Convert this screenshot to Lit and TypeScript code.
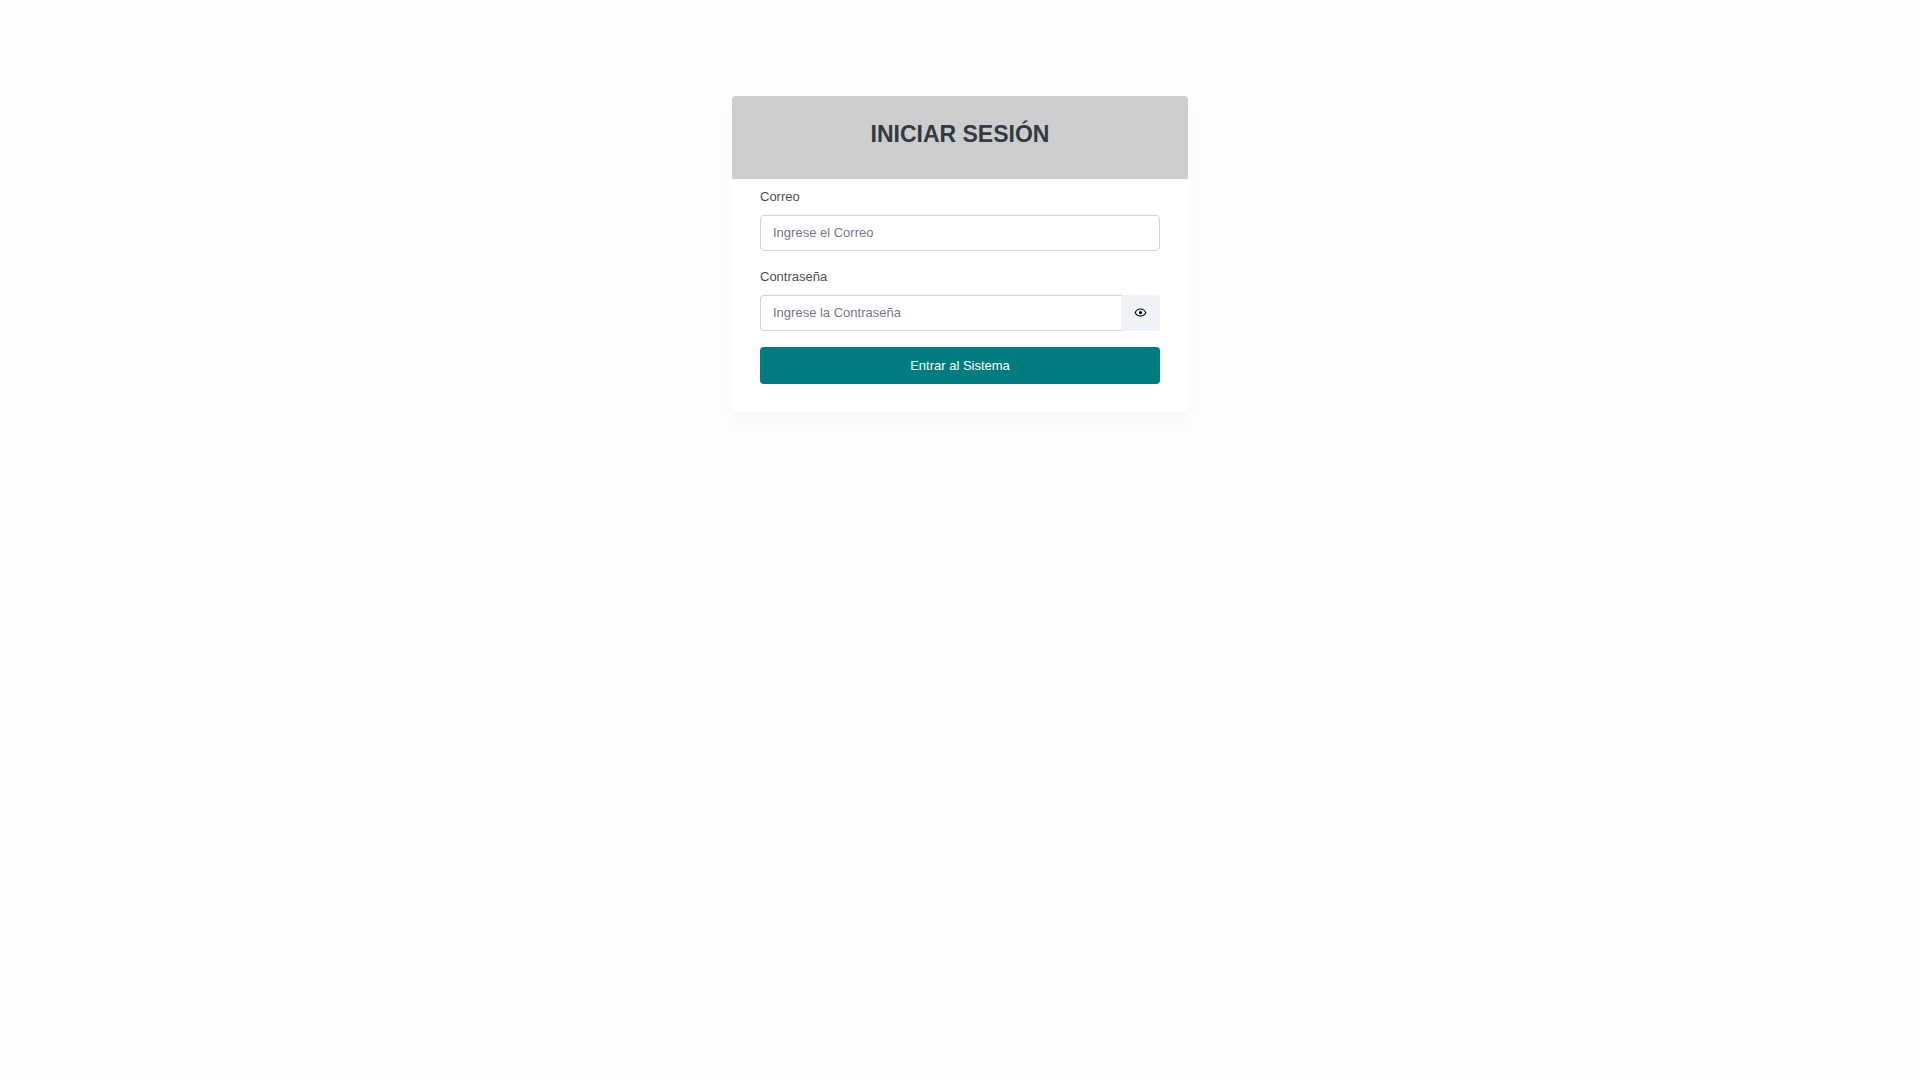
import { LitElement, html, css } from "lit";
import { customElement, state } from "lit/decorators.js";

@customElement("app-root")
export class AppRoot extends LitElement {
  static styles = css`
    :host {
      display: block;
      min-height: 100vh;
      box-sizing: border-box;
      padding: 96px 12px 24px;
      background: #fefefe;
      color: #495057;
      font: 13px/20px "Liberation Sans", Arial, sans-serif;
    }
    *,
    *::before,
    *::after {
      box-sizing: border-box;
    }
    .card {
      max-width: 456px;
      margin: 0 auto;
      background: #fff;
      border-radius: 4px;
      box-shadow: 0 12px 24px rgba(18, 38, 63, 0.03);
      overflow: hidden;
    }
    .header {
      padding: 24px 24px 30px;
      background: #cccdcf;
      text-align: center;
    }
    .title {
      margin: 0;
      color: #343a40;
      font-size: 23px;
      line-height: 29px;
      font-weight: 700;
    }
    .form {
      display: flex;
      flex-direction: column;
      gap: 16px;
      padding: 8px 28px 28px;
    }
    .field {
      display: flex;
      flex-direction: column;
      gap: 8px;
    }
    .group {
      display: flex;
    }
    .input {
      flex: 1;
      min-width: 0;
      width: 100%;
      padding: 7px 12px;
      border: 1px solid #ced4da;
      border-radius: 4px;
      background: #fff;
      color: #495057;
      font: inherit;
    }
    .input::placeholder {
      color: #74788d;
      opacity: 1;
    }
    .group .input {
      border-right: 0;
      border-radius: 4px 0 0 4px;
    }
    .toggle {
      display: flex;
      align-items: center;
      padding: 0 13px 2px;
      border: 0;
      border-radius: 0 4px 4px 0;
      background: #eff2f7;
      color: #000;
      cursor: pointer;
    }
    .icon {
      display: block;
      width: 13px;
      height: 13px;
      fill: currentColor;
    }
    .submit {
      padding: 8px 12px;
      border: 0;
      border-radius: 4px;
      background: #007b7f;
      color: #fff;
      font: inherit;
      line-height: 21px;
      cursor: pointer;
    }
  `;

  @state() private visible = false;

  private toggle() {
    this.visible = !this.visible;
  }

  private submit(event: Event) {
    event.preventDefault();
  }

  render() {
    return html`
      <main class="card">
        <header class="header">
          <h1 class="title">INICIAR SESIÓN</h1>
        </header>
        <form class="form" @submit=${this.submit}>
          <div class="field">
            <label for="email">Correo</label>
            <input class="input" id="email" type="text" placeholder="Ingrese el Correo" />
          </div>
          <div class="field">
            <label for="password">Contraseña</label>
            <div class="group">
              <input
                class="input"
                id="password"
                type=${this.visible ? "text" : "password"}
                placeholder="Ingrese la Contraseña"
              />
              <button class="toggle" type="button" aria-label="Mostrar contraseña" @click=${this.toggle}>
                <svg class="icon" viewBox="0 0 24 24" aria-hidden="true">
                  <path
                    d="M12,9A3,3 0 0,1 15,12A3,3 0 0,1 12,15A3,3 0 0,1 9,12A3,3 0 0,1 12,9M12,4.5C17,4.5 21.27,7.61 23,12C21.27,16.39 17,19.5 12,19.5C7,19.5 2.73,16.39 1,12C2.73,7.61 7,4.5 12,4.5M3.18,12C4.83,15.36 8.24,17.5 12,17.5C15.76,17.5 19.17,15.36 20.82,12C19.17,8.64 15.76,6.5 12,6.5C8.24,6.5 4.83,8.64 3.18,12Z"
                  />
                </svg>
              </button>
            </div>
          </div>
          <button class="submit" type="submit">Entrar al Sistema</button>
        </form>
      </main>
    `;
  }
}
